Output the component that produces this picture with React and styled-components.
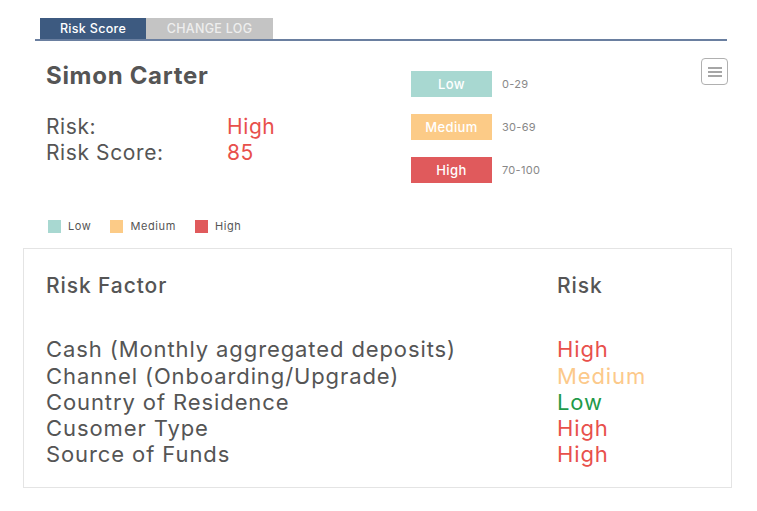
import React from 'react';
import styled, { createGlobalStyle } from 'styled-components';

const GlobalStyle = createGlobalStyle`
    body {
        margin: 0;
        background: #ffffff;
        font-family: 'Inter', 'DejaVu Sans', sans-serif;
        color: #555555;
    }
`;

const COLORS = {
    Low: '#a8d8d1',
    Medium: '#fccb87',
    High: '#e05a5c',
};

const TEXT_COLORS = {
    Low: '#1f9a4a',
    Medium: '#fcc98a',
    High: '#e8504b',
};

const Page = styled.div`
    width: 757px;
    height: 511px;
    padding-top: 18px;
    box-sizing: border-box;
`;

const TabBar = styled.div`
    margin-left: 35px;
    width: 692px;
    padding-left: 5px;
    box-sizing: border-box;
    display: flex;
    border-bottom: 2px solid #6a7fa0;
`;

const Tab = styled.div`
    height: 21px;
    width: ${(p) => p.width}px;
    display: flex;
    align-items: center;
    justify-content: center;
    font-size: 12.5px;
    font-weight: 500;
    letter-spacing: 0.3px;
    background: ${(p) => (p.active ? '#3d5a80' : '#c4c4c4')};
    color: ${(p) => (p.active ? '#ffffff' : '#eeeeee')};
`;

const Header = styled.div`
    display: flex;
    margin: 17px 0 0 46px;
    width: 682px;
`;

const Person = styled.div`
    width: 365px;
`;

const Name = styled.div`
    font-size: 24px;
    font-weight: 700;
    line-height: 28px;
    letter-spacing: 0.7px;
    color: #555555;
    margin-top: 4px;
`;

const InfoGrid = styled.div`
    display: grid;
    grid-template-columns: 181px auto;
    margin-top: 24px;
    font-size: 21px;
    line-height: 26px;
    letter-spacing: 0.6px;
`;

const Value = styled.span`
    color: #e8504b;
`;

const Scale = styled.div`
    display: flex;
    flex-direction: column;
    gap: 17px;
    margin-top: 13px;
    flex: 1;
`;

const ScaleRow = styled.div`
    display: flex;
    align-items: center;
    gap: 10px;
`;

const Chip = styled.div`
    width: 81px;
    height: 26px;
    background: ${(p) => COLORS[p.level]};
    color: #ffffff;
    font-size: 13px;
    font-weight: 500;
    letter-spacing: 0.4px;
    display: flex;
    align-items: center;
    justify-content: center;
`;

const Range = styled.span`
    font-size: 11px;
    letter-spacing: 0.3px;
    color: #888888;
`;

const MenuButton = styled.button`
    width: 27px;
    height: 27px;
    padding: 0;
    border: 1px solid #b0b0b0;
    border-radius: 4px;
    background: #ffffff;
    display: flex;
    align-items: center;
    justify-content: center;
`;

const Legend = styled.div`
    display: flex;
    align-items: center;
    margin: 36px 0 0 48px;
    gap: 19px;
    font-size: 11px;
    letter-spacing: 0.6px;
    color: #555555;
`;

const LegendItem = styled.div`
    display: flex;
    align-items: center;
    gap: 7px;
`;

const Swatch = styled.span`
    width: 13px;
    height: 13px;
    background: ${(p) => COLORS[p.level]};
`;

const Card = styled.div`
    margin: 15px 0 0 23px;
    width: 709px;
    height: 240px;
    box-sizing: border-box;
    border: 1px solid #e4e4e4;
    padding: 24px 22px;
`;

const TableGrid = styled.div`
    display: grid;
    grid-template-columns: 511px auto;
    font-size: 22px;
    line-height: 26.3px;
    letter-spacing: 0.9px;
`;

const HeadCell = styled.div`
    font-size: 21px;
    font-weight: 500;
    letter-spacing: 0.9px;
    color: #555555;
    margin-bottom: 37px;
`;

const Level = styled.span`
    color: ${(p) => TEXT_COLORS[p.level]};
`;

const factors = [
    ['Cash (Monthly aggregated deposits)', 'High'],
    ['Channel (Onboarding/Upgrade)', 'Medium'],
    ['Country of Residence', 'Low'],
    ['Cusomer Type', 'High'],
    ['Source of Funds', 'High'],
];

const ranges = [
    ['Low', '0-29'],
    ['Medium', '30-69'],
    ['High', '70-100'],
];

const App = () => {
    return (
        <Page>
            <GlobalStyle />
            <TabBar>
                <Tab active width={106}>Risk Score</Tab>
                <Tab width={127}>CHANGE LOG</Tab>
            </TabBar>
            <Header>
                <Person>
                    <Name>Simon Carter</Name>
                    <InfoGrid>
                        <span>Risk:</span>
                        <Value>High</Value>
                        <span>Risk Score:</span>
                        <Value>85</Value>
                    </InfoGrid>
                </Person>
                <Scale>
                    {ranges.map(([level, range]) => (
                        <ScaleRow key={level}>
                            <Chip level={level}>{level}</Chip>
                            <Range>{range}</Range>
                        </ScaleRow>
                    ))}
                </Scale>
                <MenuButton aria-label='menu'>
                    <svg width='14' height='10' viewBox='0 0 14 10'>
                        <g stroke='#888' strokeWidth='1.5'>
                            <line x1='0' y1='1' x2='14' y2='1' />
                            <line x1='0' y1='5' x2='14' y2='5' />
                            <line x1='0' y1='9' x2='14' y2='9' />
                        </g>
                    </svg>
                </MenuButton>
            </Header>
            <Legend>
                {ranges.map(([level]) => (
                    <LegendItem key={level}>
                        <Swatch level={level} />
                        {level}
                    </LegendItem>
                ))}
            </Legend>
            <Card>
                <TableGrid>
                    <HeadCell>Risk Factor</HeadCell>
                    <HeadCell>Risk</HeadCell>
                    {factors.map(([name, level]) => (
                        <React.Fragment key={name}>
                            <span>{name}</span>
                            <Level level={level}>{level}</Level>
                        </React.Fragment>
                    ))}
                </TableGrid>
            </Card>
        </Page>
    );
};

export default App;
